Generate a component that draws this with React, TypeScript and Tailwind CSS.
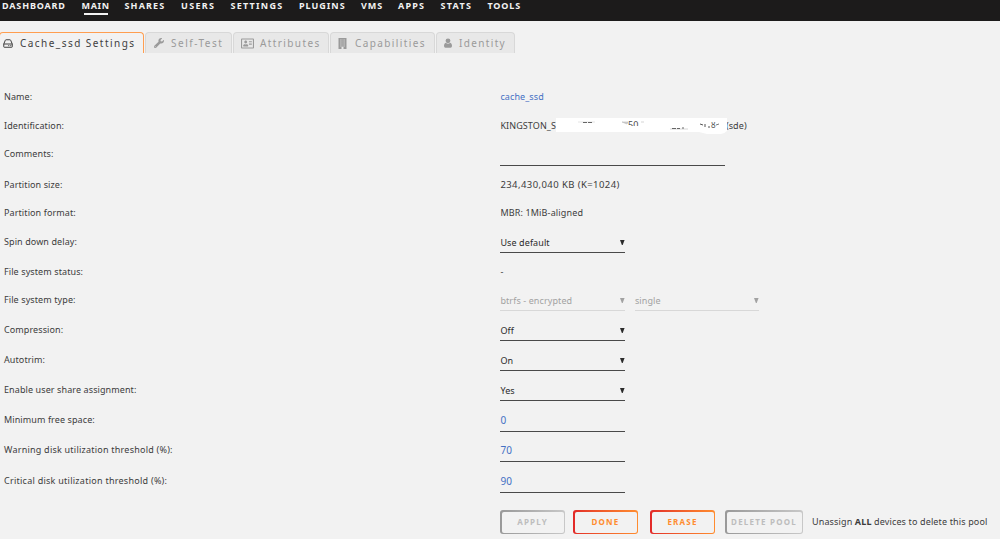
import React from 'react';
import { FaWrench, FaRegAddressCard } from 'react-icons/fa';

const HddIcon: React.FC = () => (
  <svg width="10" height="9" viewBox="0 0 20 18" fill="none" stroke="currentColor" strokeWidth="2">
    <path d="M1.5 10 4.6 2.6Q5 1.5 6.2 1.5h7.6q1.2 0 1.6 1.1L18.5 10v5.5q0 1-1 1h-15q-1 0-1-1zM1.5 10h17" />
    <path d="M10.5 13.3h2M14.5 13.3h2" />
  </svg>
);

const BuildingIcon: React.FC = () => (
  <svg width="9" height="11" viewBox="0 0 18 22">
    <path d="M1 0h16v22H1z" fill="currentColor" />
    <path d="M4 4h10M4 8h10M4 12h10M4 16h10" stroke="#e8e8e8" strokeWidth="1.4" strokeDasharray="1.800 .9" />
    <path d="M7 17.500h4V22H7z" fill="#e8e8e8" />
  </svg>
);

const UserIcon: React.FC = () => (
  <svg width="8" height="10" viewBox="0 0 16 20" fill="currentColor">
    <circle cx="8" cy="5.6" r="4.8" />
    <path d="M3.6 9.4C1 10.2 0 13 0 16q0 3.4 3 3.4h10q3 0 3-3.4c0-3-1-5.8-3.6-6.6Q8 13.5 3.6 9.4z" />
  </svg>
);

const menu = [
  { label: 'DASHBOARD', box: 'w-[79.5px] tracking-[0.85px]' },
  { label: 'MAIN', box: 'w-[43px] tracking-[0.7px]', active: true },
  { label: 'SHARES', box: 'w-[56.5px] tracking-[1.15px]' },
  { label: 'USERS', box: 'w-[49.5px] tracking-[1.35px]' },
  { label: 'SETTINGS', box: 'w-[68.5px] tracking-[1.25px]' },
  { label: 'PLUGINS', box: 'w-[62px] tracking-[1px]' },
  { label: 'VMS', box: 'w-[37px] tracking-[0.9px]' },
  { label: 'APPS', box: 'w-[42.5px] tracking-[1.2px]' },
  { label: 'STATS', box: 'w-[47px] tracking-[1.3px]' },
  { label: 'TOOLS', box: 'w-[40px] tracking-[0.85px]' },
];

const tabs = [
  { label: 'Cache_ssd Settings', icon: <HddIcon />, box: 'w-[145px] pl-[3px] gap-[7px] -ml-px tracking-[1.45px]', active: true },
  { label: 'Self-Test', icon: <FaWrench size={10} />, box: 'w-[87px] pl-[8px] gap-[7px] tracking-[1.5px]' },
  { label: 'Attributes', icon: <FaRegAddressCard size={13} />, box: 'w-[96px] pl-[7px] gap-[6px] tracking-[1.4px]' },
  { label: 'Capabilities', icon: <BuildingIcon />, box: 'w-[105px] pl-[7px] gap-[8px] tracking-[1.4px]' },
  { label: 'Identity', icon: <UserIcon />, box: 'w-[79px] pl-[7px] gap-[7px] tracking-[1.35px]' },
];

const Arrow: React.FC = () => (
  <svg width="5" height="5" viewBox="0 0 5 5" fill="currentColor" className="mb-px">
    <path d="M0 0h4.6L2.7 5h-.8z" />
  </svg>
);

const Select: React.FC<{ value: string; disabled?: boolean }> = ({ value, disabled }) => (
  <div className={`flex h-[19px] w-[124.5px] items-center justify-between border-b ${disabled ? 'border-[#d8d8d8] text-[#a2a2a2]' : 'border-[#4a4a4a] text-[#2b2b2b]'}`}>
    <span>{value}</span>
    <Arrow />
  </div>
);

const Field: React.FC<{ value: string }> = ({ value }) => (
  <div className="h-[20px] w-[124.5px] border-b border-[#4a4a4a] text-[10px] leading-[17px] text-[#4470c4]">{value}</div>
);

// the serial number is scribbled over, only a few bits of it show through
const Identification: React.FC = () => (
  <div className="relative flex h-4">
    <span className="w-[225.5px]">KINGSTON_S</span>
    <span>(sde)</span>
    <svg className="absolute top-0 left-[55.5px]" width="175" height="18" viewBox="0 0 175 18">
      <path d="M0 0h171v13q-3 3-6 3h-14l-8-2H0z" fill="#fff" />
      <svg x="66" y="3" width="22" height="5">
        <text x="6" y="7" fontSize="9" fill="#4a4a4a">50</text>
        <path d="M0 1h6l-1 2zM19 1h3" fill="#d0d0d0" stroke="#bbb" strokeWidth=".6" />
      </svg>
      <path d="M22 4h17" stroke="#ddd" strokeWidth=".8" />
      <path d="M27 4.5h4M32 4.5h4" stroke="#666" strokeWidth="1" />
      <path d="M114 11h18" stroke="#ccc" strokeWidth=".8" />
      <path d="M116 10.5h4M121 10.5h3M126 10h2" stroke="#666" strokeWidth="1" />
      <path d="M144 6l3 1M149 6v3M152 9h2" stroke="#555" strokeWidth="1" />
      <svg x="154" y="4" width="10" height="7">
        <text x="1" y="6" fontSize="8" fill="#555">8</text>
        <path d="M6 3l3-1" stroke="#777" />
      </svg>
    </svg>
  </div>
);

const rows = [
  { label: 'Name:', height: 'h-[29px]', value: <span className="text-[#4470c4]">cache_ssd</span> },
  { label: 'Identification:', height: 'h-[28px]', value: <Identification /> },
  { label: 'Comments:', height: 'h-[31px]', value: <div className="h-[20px] w-[225px] border-b border-[#4a4a4a]" /> },
  { label: 'Partition size:', height: 'h-[28px]', value: <span className="text-[9.5px] tracking-[0.42px]">234,430,040 KB (K=1024)</span> },
  { label: 'Partition format:', height: 'h-[29px]', value: <span className="tracking-[0.15px]">MBR: 1MiB-aligned</span> },
  { label: 'Spin down delay:', height: 'h-[30px]', value: <Select value="Use default" /> },
  { label: 'File system status:', height: 'h-[28px]', value: '-' },
  {
    label: 'File system type:',
    height: 'h-[30px]',
    value: (
      <div className="flex gap-[10px]">
        <Select value="btrfs - encrypted" disabled />
        <Select value="single" disabled />
      </div>
    ),
  },
  { label: 'Compression:', height: 'h-[30px]', value: <Select value="Off" /> },
  { label: 'Autotrim:', height: 'h-[30px]', value: <Select value="On" /> },
  { label: 'Enable user share assignment:', height: 'h-[30px]', value: <Select value="Yes" /> },
  { label: 'Minimum free space:', height: 'h-[30px]', value: <Field value="0" /> },
  { label: 'Warning disk utilization threshold (%):', height: 'h-[31px] tracking-[0.23px]', value: <Field value="70" /> },
  { label: 'Critical disk utilization threshold (%):', height: 'h-[37px] tracking-[0.26px]', value: <Field value="90" /> },
];

const Button: React.FC<{ label: string; box: string; disabled?: boolean }> = ({ label, box, disabled }) => (
  <div className={`h-6 rounded-[3px] p-[1.5px] ${box} ${disabled ? 'bg-linear-to-r from-[#999] to-[#c8c8c8]' : 'bg-linear-to-r from-[#e22828] to-[#ff8c2f]'}`}>
    <div className={`flex h-full items-center justify-center rounded-[2px] bg-[#f2f2f2] text-[8px] font-bold tracking-[1.2px] ${disabled ? 'text-[#bdbdbd]' : 'text-[#ff8c2f]'}`}>
      {label}
    </div>
  </div>
);

const App: React.FC = () => {
  return (
    <div className="h-[539px] overflow-hidden bg-[#f2f2f2] font-['Noto_Sans',sans-serif] text-[9px] leading-4 whitespace-nowrap text-[#3c3c3c]">
      <nav className="flex h-[21px] bg-[#1c1b1b] pl-[2px] text-[9px] leading-[12px] font-bold text-[#f2f2f2]">
        {menu.map((item) => (
          <div key={item.label} className={item.box}>
            {item.label}
            {item.active && <div className="mt-px ml-[2px] h-[1.5px] w-6 bg-[#f2f2f2]" />}
          </div>
        ))}
      </nav>

      <div className="mt-[11px] flex h-[21px] gap-px">
        {tabs.map((tab) => (
          <div
            key={tab.label}
            className={`flex items-center rounded-t-[4px] border border-b-0 text-[10px] ${tab.box} ${tab.active ? 'border-[#ff9e50] text-[#404040]' : 'border-[#d8d8d8] bg-[#e8e8e8] text-[#9a9a9a]'}`}
          >
            {tab.icon}
            <span>{tab.label}</span>
          </div>
        ))}
      </div>

      <main className="pt-[36px] pl-1 tracking-[0.1px]">
        {rows.map((row) => (
          <div key={row.label} className={`flex ${row.height}`}>
            <div className="w-[496px]">{row.label}</div>
            <div className="pl-[0.4px]">{row.value}</div>
          </div>
        ))}
        <div className="flex items-center pl-[496px]">
          <Button label="APPLY" box="w-[65px] mr-[8px]" disabled />
          <Button label="DONE" box="w-[65px] mr-[12px]" />
          <Button label="ERASE" box="w-[65px] mr-[10px]" />
          <Button label="DELETE POOL" box="w-[78px] mr-[9px]" disabled />
          <span className="tracking-[0.14px]">
            Unassign <b>ALL</b> devices to delete this pool
          </span>
        </div>
      </main>
    </div>
  );
};

export default App;
